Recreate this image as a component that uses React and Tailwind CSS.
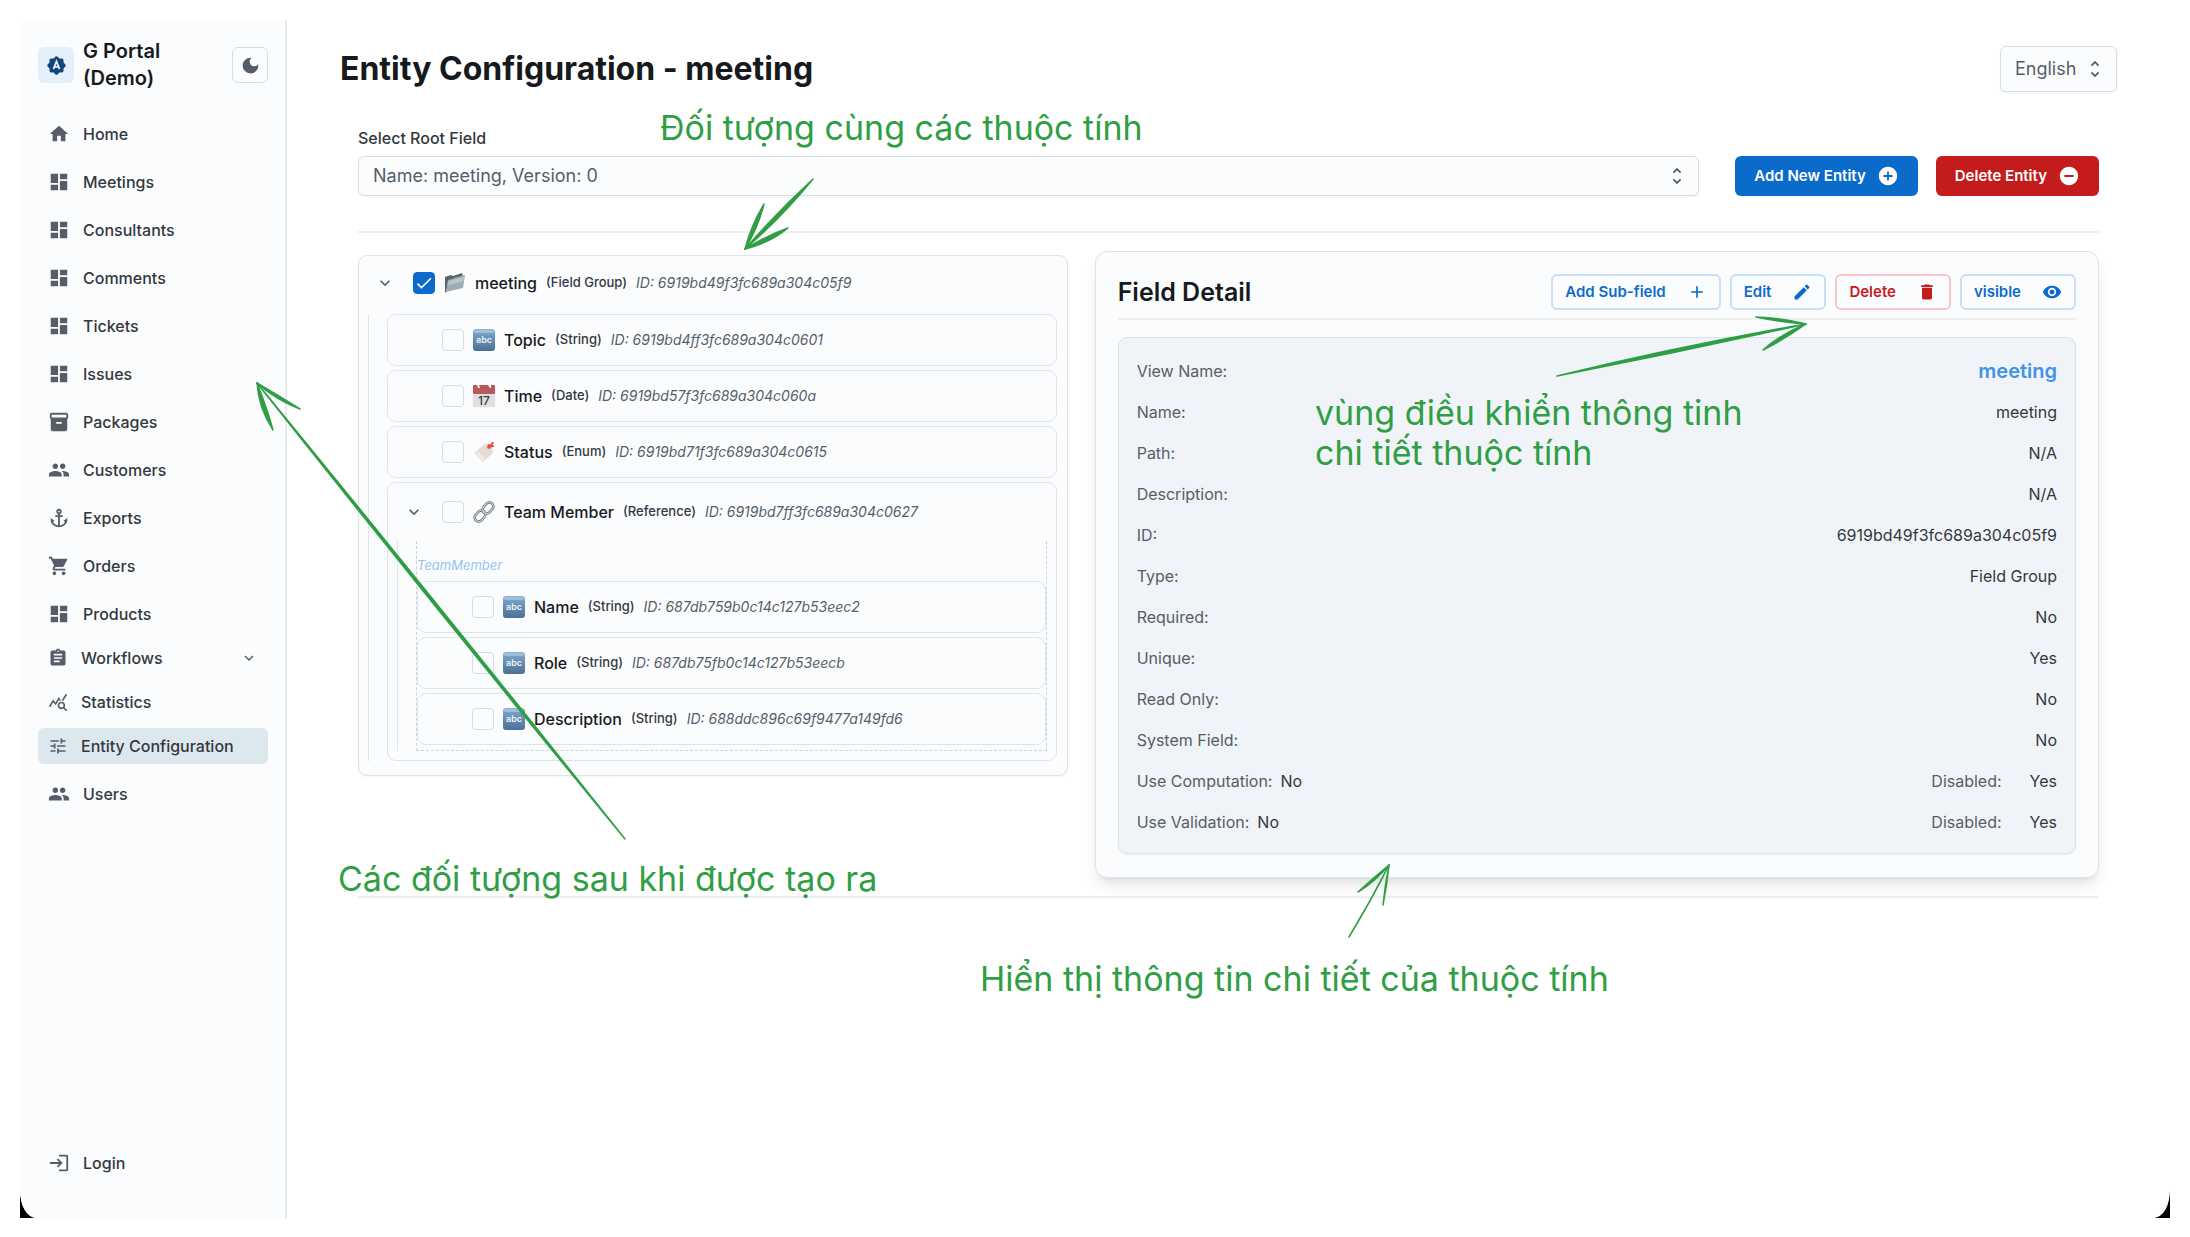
import React, { useState } from 'react'
import {
  MdAddCircle,
  MdAdd,
  MdAnchor,
  MdAssignment,
  MdCheck,
  MdDarkMode,
  MdDashboard,
  MdDelete,
  MdEdit,
  MdHome,
  MdInventory2,
  MdKeyboardArrowDown,
  MdLogin,
  MdOutlineQueryStats,
  MdPeople,
  MdRemoveCircle,
  MdRemoveRedEye,
  MdShoppingCart,
  MdTune,
  MdUnfoldMore
} from 'react-icons/md'

const mainLinks = [
  { label: 'Home', icon: MdHome },
  { label: 'Meetings', icon: MdDashboard },
  { label: 'Consultants', icon: MdDashboard },
  { label: 'Comments', icon: MdDashboard },
  { label: 'Tickets', icon: MdDashboard },
  { label: 'Issues', icon: MdDashboard },
  { label: 'Packages', icon: MdInventory2 },
  { label: 'Customers', icon: MdPeople },
  { label: 'Exports', icon: MdAnchor },
  { label: 'Orders', icon: MdShoppingCart },
  { label: 'Products', icon: MdDashboard }
]

const details = [
  ['Name', 'meeting'],
  ['Path', 'N/A'],
  ['Description', 'N/A'],
  ['ID', '6919bd49f3fc689a304c05f9'],
  ['Type', 'Field Group'],
  ['Required', 'No'],
  ['Unique', 'Yes'],
  ['Read Only', 'No'],
  ['System Field', 'No']
]

function NavLink({ label, icon: Icon }) {
  return (
    <a href="#" className="flex h-9 items-center gap-[13px] rounded-md px-[10px] text-base font-medium text-[#32383e]">
      <Icon size={22} className="shrink-0 text-[#555e68]" />
      {label}
    </a>
  )
}

function SubLink({ label, icon: Icon, active, children }) {
  return (
    <a
      href="#"
      className={`flex h-9 items-center gap-[13px] rounded-md px-[10px] text-base font-medium text-[#32383e] ${active ? 'bg-[#dde7ee]' : ''}`}
    >
      <Icon size={20} className="shrink-0 text-[#555e68]" />
      <span className="grow whitespace-nowrap">{label}</span>
      {children}
    </a>
  )
}

function Sidebar() {
  return (
    <aside className="flex w-[267px] shrink-0 flex-col border-r-2 border-[#e6e9ed] bg-[#fbfcfe] pt-[18px] pr-[17px] pb-[37px] pl-[18px]">
      <div className="flex items-center gap-[9px]">
        <span className="flex size-9 shrink-0 items-center justify-center rounded-md bg-[#e3effb]">
          <svg width="21" height="21" viewBox="0 0 24 24">
            <path
              fill="#12467b"
              d="M20 8.69V6c0-1.1-.9-2-2-2h-2.690l-1.900-1.900c-.78-.78-2.050-.78-2.830 0L8.690 4H6c-1.100 0-2 .9-2 2v2.690l-1.900 1.900c-.78.78-.78 2.050 0 2.830l1.900 1.900V18c0 1.100.9 2 2 2h2.690l1.900 1.900c.78.78 2.050.78 2.830 0l1.900-1.900H18c1.100 0 2-.9 2-2v-2.690l1.900-1.900c.78-.78.78-2.050 0-2.830L20 8.690z"
            />
            <path fill="none" stroke="#e3effb" strokeWidth="2" d="M8.500 16.200L12 7.300L15.500 16.200M9.700 13.600H14.300" />
          </svg>
        </span>
        <h2 className="grow text-xl leading-[27px] font-semibold text-[#171a1c]">
          G Portal
          <br />
          (Demo)
        </h2>
        <button
          type="button"
          aria-label="Toggle color scheme"
          className="flex size-9 items-center justify-center rounded-md border border-[#d5dde6] bg-[#fbfcfe] text-[#555e68]"
        >
          <MdDarkMode size={21} />
        </button>
      </div>

      <nav className="mt-6 flex grow flex-col">
        <div className="flex flex-col gap-3">
          {mainLinks.map(l => (
            <NavLink key={l.label} {...l} />
          ))}
        </div>
        <div className="mt-2 flex flex-col gap-2">
          <SubLink label="Workflows" icon={MdAssignment}>
            <MdKeyboardArrowDown size={18} className="text-[#555e68]" />
          </SubLink>
          <SubLink label="Statistics" icon={MdOutlineQueryStats} />
          <SubLink label="Entity Configuration" icon={MdTune} active />
        </div>
        <div className="mt-3">
          <NavLink label="Users" icon={MdPeople} />
        </div>
        <div className="mt-auto">
          <NavLink label="Login" icon={MdLogin} />
        </div>
      </nav>
    </aside>
  )
}

function FieldIcon({ type }) {
  if (type === 'String') {
    return (
      <svg width="22" height="22" viewBox="0 0 22 22" className="shrink-0">
        <defs>
          <linearGradient id="abcFill" x1="0" y1="0" x2="0" y2="1">
            <stop offset="0" stopColor="#8fb4d3" />
            <stop offset="0.3" stopColor="#7097bc" />
            <stop offset="1" stopColor="#4d7196" />
          </linearGradient>
        </defs>
        <rect width="22" height="22" rx="3" fill="url(#abcFill)" />
        <rect x="1" y="1" width="20" height="3" rx="1" fill="#a9c6dd" opacity="0.7" />
        <text x="11" y="14" fontSize="9" fontWeight="600" fill="#e9f1f8" textAnchor="middle">abc</text>
      </svg>
    )
  }
  if (type === 'Date') {
    return (
      <svg width="22" height="22" viewBox="0 0 22 22" className="shrink-0">
        <rect y="1" width="22" height="21" rx="1" fill="#dfe0e1" />
        <rect y="0" width="22" height="9" rx="1" fill="#b65a5c" />
        <path d="M4 0l1 3h2L6 0zM15 0l2 3h1V0z" fill="#fff" />
        <text x="11" y="20" fontSize="12" fontWeight="500" fill="#3c3c3c" textAnchor="middle">17</text>
      </svg>
    )
  }
  if (type === 'Enum') {
    return (
      <svg width="22" height="22" viewBox="0 0 22 22" className="shrink-0">
        <path d="M1 12L13 2l6 3 1 7-10 9z" fill="#e5dbd2" />
        <path d="M1 12L10 21l3-3L4 9z" fill="#efe9e4" />
        <circle cx="16" cy="6" r="2" fill="#b3796c" />
        <path d="M15 7c-1-4 1-5 2-3 1-3 4-4 4-2l-2 2c3 0 3 2 0 2z" fill="#ee4540" />
      </svg>
    )
  }
  if (type === 'Reference') {
    return (
      <svg width="22" height="22" viewBox="0 0 22 22" className="shrink-0" fill="none">
        <g stroke="#6c7075" strokeWidth="2.600">
          <rect x="9" y="3" width="12" height="8" rx="4" transform="rotate(-48 15 7)" />
          <rect x="1" y="11" width="12" height="8" rx="4" transform="rotate(-48 7 15)" />
        </g>
        <g stroke="#d5d8da" strokeWidth="1.100">
          <rect x="9" y="3" width="12" height="8" rx="4" transform="rotate(-48 15 7)" />
          <rect x="1" y="11" width="12" height="8" rx="4" transform="rotate(-48 7 15)" />
        </g>
      </svg>
    )
  }
  return (
    <svg width="22" height="22" viewBox="0 0 22 22" className="shrink-0">
      <path d="M1 5l6-2 2 1 9-3 1 4-15 5-2 11-1-1z" fill="#59646d" />
      <path d="M4 8l4-1 2-1 11-3-2 13L2 20z" fill="#a0acb5" />
      <path d="M5 9l15-4-1 4L4 13z" fill="#bcc6cd" />
    </svg>
  )
}

function FieldLine({ name, type, id, open, checked }) {
  const [on, setOn] = useState(!!checked)
  return (
    <div className="flex items-center pl-4">
      <span className="flex w-[38px] shrink-0">
        {open && (
          <button type="button" aria-label={`Collapse ${name}`} className="text-[#555e68]">
            <MdKeyboardArrowDown size={20} />
          </button>
        )}
      </span>
      <label className="flex items-center gap-[9px] whitespace-nowrap">
        <span className="grid size-[22px] shrink-0">
          <input
            type="checkbox"
            checked={on}
            onChange={e => setOn(e.target.checked)}
            className="col-start-1 row-start-1 size-[22px] appearance-none rounded-[4px] border border-[#d0dce7] bg-[#fbfcfe] checked:border-[#0b6bcb] checked:bg-[#0b6bcb]"
          />
          {on && <MdCheck size={20} className="pointer-events-none col-start-1 row-start-1 place-self-center text-white" />}
        </span>
        <FieldIcon type={type} />
        <span className="text-base font-medium text-[#171a1c]">{name}</span>
        <span className="text-[13px] font-medium text-[#32383e]">({type})</span>
        <em className="text-sm font-normal text-[#555e68]">ID: {id}</em>
      </label>
    </div>
  )
}

function FieldBox(props) {
  return (
    <div className="flex h-[52px] items-center rounded-[9px] border border-[#e0e3e7]">
      <FieldLine {...props} />
    </div>
  )
}

function FieldTree() {
  return (
    <section className="col-span-5 mt-1 rounded-[9px] border border-[#e0e3e7] bg-[#fbfcfe] pr-[10px] pb-[14px] pl-[9px] shadow-xs">
      <div className="-ml-[9px] flex h-[58px] items-center pb-[5px]">
        <FieldLine name="meeting" type="Field Group" id="6919bd49f3fc689a304c05f9" open checked />
      </div>
      <div className="flex flex-col gap-1 border-l border-[#e0e3e7] pl-[18px]">
        <FieldBox name="Topic" type="String" id="6919bd4ff3fc689a304c0601" />
        <FieldBox name="Time" type="Date" id="6919bd57f3fc689a304c060a" />
        <FieldBox name="Status" type="Enum" id="6919bd71f3fc689a304c0615" />
        <div className="rounded-[9px] border border-[#e0e3e7] pr-[9px] pb-[9px] pl-[9px]">
          <div className="-ml-[9px] flex h-[58px] items-center">
            <FieldLine name="Team Member" type="Reference" id="6919bd7ff3fc689a304c0627" open />
          </div>
          <div className="border-l border-[#e0e3e7] pl-[18px]">
            <div className="flex flex-col gap-1 border border-t-0 border-dashed border-[#cdd2d8] pb-[5px]">
              <p className="pt-3 text-[13px] leading-6 text-[#97c3f0] italic">TeamMember</p>
              <FieldBox name="Name" type="String" id="687db759b0c14c127b53eec2" />
              <FieldBox name="Role" type="String" id="687db75fb0c14c127b53eecb" />
              <FieldBox name="Description" type="String" id="688ddc896c69f9477a149fd6" />
            </div>
          </div>
        </div>
      </div>
    </section>
  )
}

const tones = {
  blue: 'border-[#c7dff7] text-[#0b6bcb]',
  red: 'border-[#f7c5c5] text-[#c41c1c]'
}

function OutlineButton({ tone = 'blue', icon: Icon, children }) {
  return (
    <button
      type="button"
      className={`flex h-9 items-center gap-[21px] rounded-md border-2 px-3 text-[15px] font-semibold whitespace-nowrap ${tones[tone]}`}
    >
      {children}
      <Icon size={20} />
    </button>
  )
}

function DetailRow({ label, children }) {
  return (
    <div className="flex h-[41px] items-center justify-between">
      <dt className="text-[#555e68]">{label}:</dt>
      <dd className="text-[#32383e]">{children}</dd>
    </div>
  )
}

function UsageRow({ label }) {
  return (
    <div className="flex h-[41px] items-center">
      <dt className="text-[#555e68]">{label}:</dt>
      <dd className="ml-2 text-[#32383e]">No</dd>
      <dt className="ml-auto text-[#555e68]">Disabled:</dt>
      <dd className="ml-7 text-[#32383e]">Yes</dd>
    </div>
  )
}

function FieldDetail() {
  return (
    <section className="col-span-7 rounded-xl border border-[#dde3ea] bg-[#fbfcfe] px-[22px] pt-[22px] pb-[23px] shadow-lg">
      <div className="flex h-[46px] items-start justify-between border-b-2 border-[#eceef0]">
        <h2 className="text-[25px] leading-9 font-semibold text-[#171a1c]">Field Detail</h2>
        <div className="flex gap-[9px]">
          <OutlineButton icon={MdAdd}>Add Sub-field</OutlineButton>
          <OutlineButton icon={MdEdit}>Edit</OutlineButton>
          <OutlineButton icon={MdDelete} tone="red">Delete</OutlineButton>
          <OutlineButton icon={MdRemoveRedEye}>visible</OutlineButton>
        </div>
      </div>
      <dl className="mt-[17px] rounded-[9px] border border-[#d9e2ea] bg-[#f0f4f8] px-[18px] pt-3 pb-[11px] text-base shadow-xs">
        <div className="flex h-[41px] items-center justify-between">
          <dt className="text-[#555e68]">View Name:</dt>
          <dd className="text-xl font-semibold text-[#4393e4]">meeting</dd>
        </div>
        {details.map(([label, value]) => (
          <DetailRow key={label} label={label}>{value}</DetailRow>
        ))}
        <UsageRow label="Use Computation" />
        <UsageRow label="Use Validation" />
      </dl>
    </section>
  )
}

// hand drawn notes laid over the page
function Notes() {
  return (
    <div className="pointer-events-none absolute inset-0 overflow-hidden text-[34px] leading-10 whitespace-nowrap text-[#2f9e44]">
      <svg width="2190" height="1237" viewBox="0 0 2190 1237" fill="#2f9e44" stroke="#2f9e44" strokeWidth="1.500" strokeLinejoin="round" className="absolute top-0 left-0">
        <path d="M813 179Q777 212 745 249Q782 217 813 179z" />
        <path d="M764 204Q751 226 745 249Q758 228 764 204z" />
        <path d="M788 228Q766 236 745 249Q770 243 788 228z" />
        <path d="M625 839Q439 613 257 383Q443 610 625 839z" />
        <path d="M257 383Q259 409 273 430Q267 408 257 383z" />
        <path d="M257 383Q276 400 300 409Q279 396 257 383z" />
        <path d="M1557 376Q1680 346 1806 324Q1681 352 1557 376z" />
        <path d="M1756 317Q1782 318 1806 324Q1780 322 1756 317z" />
        <path d="M1763 350Q1781 334 1806 324Q1785 339 1763 350z" />
        <path d="M1349 937Q1370 902 1389 865Q1371 901 1349 937z" />
        <path d="M1358 892Q1373 878 1389 865Q1376 881 1358 892z" />
        <path d="M1383 905Q1385 885 1389 865Q1387 885 1383 905z" />
      </svg>
      <p className="absolute top-[108px] left-[660px]">Đối tượng cùng các thuộc tính</p>
      <p className="absolute top-[859px] left-[338px]">Các đối tượng sau khi được tạo ra</p>
      <p className="absolute top-[393px] left-[1315px]">
        vùng điều khiển thông tinh
        <br />
        chi tiết thuộc tính
      </p>
      <p className="absolute top-[959px] left-[980px]">Hiển thị thông tin chi tiết của thuộc tính</p>
    </div>
  )
}

export default function App() {
  return (
    <div className="relative flex min-h-screen bg-white px-5 pt-5 pb-[19px] font-['Inter',sans-serif]">
      <div className="flex grow bg-black">
        <div className="flex grow overflow-hidden rounded-br-[16px_28px] rounded-bl-[16px_28px] bg-white">
          <Sidebar />
          <main className="min-w-0 grow px-[53px] pt-[26px]">
            <header className="flex items-center justify-between">
              <h1 className="text-[32px] leading-[46px] font-bold text-[#171a1c]">Entity Configuration - meeting</h1>
              <div className="grid items-center">
                <select
                  aria-label="Language"
                  className="col-start-1 row-start-1 h-[46px] w-[117px] appearance-none rounded-md border border-[#d5dde6] bg-[#fbfcfe] pl-[14px] text-lg text-[#555e68] shadow-xs"
                >
                  <option>English</option>
                </select>
                <MdUnfoldMore size={22} className="pointer-events-none col-start-1 row-start-1 mr-[11px] justify-self-end text-[#555e68]" />
              </div>
            </header>

            <div className="px-[18px] pt-[34px]">
              <div className="flex items-end border-b-2 border-[#eceef0] pb-[35px]">
                <div className="grow">
                  <label htmlFor="rootField" className="block text-base leading-6 font-medium text-[#32383e]">
                    Select Root Field
                  </label>
                  <div className="mt-[6px] grid items-center">
                    <select
                      id="rootField"
                      className="col-start-1 row-start-1 h-10 w-full appearance-none rounded-md border border-[#d5dde6] bg-[#fbfcfe] px-[14px] text-lg text-[#555e68] shadow-xs"
                    >
                      <option>Name: meeting, Version: 0</option>
                    </select>
                    <MdUnfoldMore size={22} className="pointer-events-none col-start-1 row-start-1 mr-[11px] justify-self-end text-[#555e68]" />
                  </div>
                </div>
                <button type="button" className="ml-9 flex h-10 items-center gap-[11px] rounded-md bg-[#0b6bcb] px-[19px] text-[15px] font-semibold text-white">
                  Add New Entity
                  <MdAddCircle size={22} />
                </button>
                <button type="button" className="ml-[18px] flex h-10 items-center gap-[11px] rounded-md bg-[#c41c1c] px-[19px] text-[15px] font-semibold text-white">
                  Delete Entity
                  <MdRemoveCircle size={22} />
                </button>
              </div>

              <div className="grid grid-cols-12 items-start gap-x-[27px] border-b-2 border-[#eceef0] pt-[18px] pb-[18px]">
                <FieldTree />
                <FieldDetail />
              </div>
            </div>
          </main>
        </div>
      </div>
      <Notes />
    </div>
  )
}
